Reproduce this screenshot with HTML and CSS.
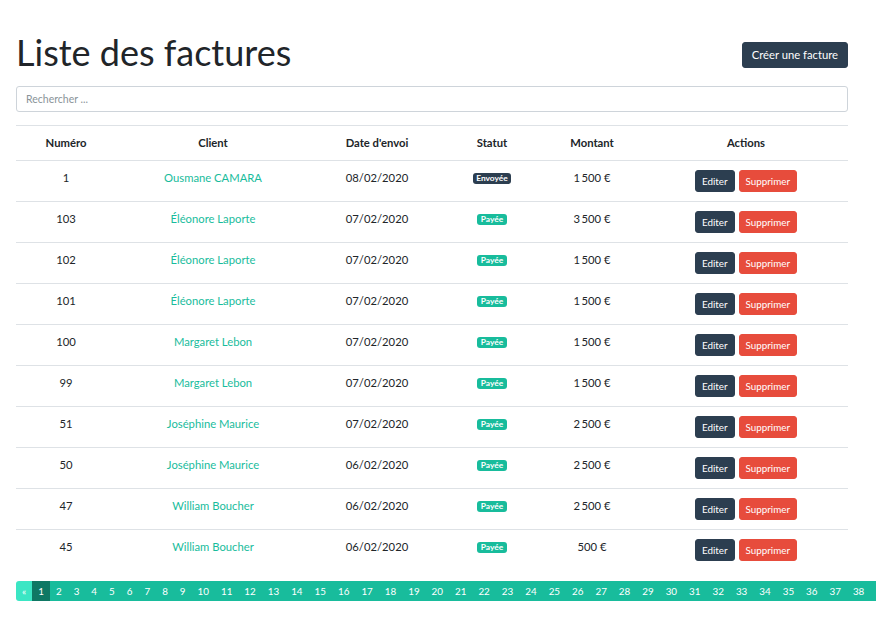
FILE: index.html
```html
<!DOCTYPE html>
<html lang="fr">
<head>
<meta charset="utf-8">
<title>Liste des factures</title>
<link rel="stylesheet" href="styles.css">
</head>
<body>
<div class="page">
  <div class="head">
    <h1 class="title">Liste des factures</h1>
    <button class="btn btn-primary btn-create">Créer une facture</button>
  </div>
  <input class="search" type="text" placeholder="Rechercher ...">
  <table class="table">
    <colgroup>
      <col class="c1"><col class="c2"><col class="c3"><col class="c4"><col class="c5"><col class="c6">
    </colgroup>
    <thead>
      <tr><th>Numéro</th><th>Client</th><th>Date d'envoi</th><th>Statut</th><th>Montant</th><th>Actions</th></tr>
    </thead>
    <tbody>
      <tr><td>1</td><td><a href="#">Ousmane CAMARA</a></td><td>08/02/2020</td><td><span class="badge badge-dark">Envoyée</span></td><td>1<span class="nsp"> </span>500&nbsp;€</td><td><div class="actions"><button class="btn btn-primary btn-sm">Editer</button><button class="btn btn-danger btn-sm">Supprimer</button></div></td></tr>
      <tr><td>103</td><td><a href="#">Éléonore Laporte</a></td><td>07/02/2020</td><td><span class="badge badge-success">Payée</span></td><td>3<span class="nsp"> </span>500&nbsp;€</td><td><div class="actions"><button class="btn btn-primary btn-sm">Editer</button><button class="btn btn-danger btn-sm">Supprimer</button></div></td></tr>
      <tr><td>102</td><td><a href="#">Éléonore Laporte</a></td><td>07/02/2020</td><td><span class="badge badge-success">Payée</span></td><td>1<span class="nsp"> </span>500&nbsp;€</td><td><div class="actions"><button class="btn btn-primary btn-sm">Editer</button><button class="btn btn-danger btn-sm">Supprimer</button></div></td></tr>
      <tr><td>101</td><td><a href="#">Éléonore Laporte</a></td><td>07/02/2020</td><td><span class="badge badge-success">Payée</span></td><td>1<span class="nsp"> </span>500&nbsp;€</td><td><div class="actions"><button class="btn btn-primary btn-sm">Editer</button><button class="btn btn-danger btn-sm">Supprimer</button></div></td></tr>
      <tr><td>100</td><td><a href="#">Margaret Lebon</a></td><td>07/02/2020</td><td><span class="badge badge-success">Payée</span></td><td>1<span class="nsp"> </span>500&nbsp;€</td><td><div class="actions"><button class="btn btn-primary btn-sm">Editer</button><button class="btn btn-danger btn-sm">Supprimer</button></div></td></tr>
      <tr><td>99</td><td><a href="#">Margaret Lebon</a></td><td>07/02/2020</td><td><span class="badge badge-success">Payée</span></td><td>1<span class="nsp"> </span>500&nbsp;€</td><td><div class="actions"><button class="btn btn-primary btn-sm">Editer</button><button class="btn btn-danger btn-sm">Supprimer</button></div></td></tr>
      <tr><td>51</td><td><a href="#">Joséphine Maurice</a></td><td>07/02/2020</td><td><span class="badge badge-success">Payée</span></td><td>2<span class="nsp"> </span>500&nbsp;€</td><td><div class="actions"><button class="btn btn-primary btn-sm">Editer</button><button class="btn btn-danger btn-sm">Supprimer</button></div></td></tr>
      <tr><td>50</td><td><a href="#">Joséphine Maurice</a></td><td>06/02/2020</td><td><span class="badge badge-success">Payée</span></td><td>2<span class="nsp"> </span>500&nbsp;€</td><td><div class="actions"><button class="btn btn-primary btn-sm">Editer</button><button class="btn btn-danger btn-sm">Supprimer</button></div></td></tr>
      <tr><td>47</td><td><a href="#">William Boucher</a></td><td>06/02/2020</td><td><span class="badge badge-success">Payée</span></td><td>2<span class="nsp"> </span>500&nbsp;€</td><td><div class="actions"><button class="btn btn-primary btn-sm">Editer</button><button class="btn btn-danger btn-sm">Supprimer</button></div></td></tr>
      <tr><td>45</td><td><a href="#">William Boucher</a></td><td>06/02/2020</td><td><span class="badge badge-success">Payée</span></td><td>500&nbsp;€</td><td><div class="actions"><button class="btn btn-primary btn-sm">Editer</button><button class="btn btn-danger btn-sm">Supprimer</button></div></td></tr>
    </tbody>
  </table>
  <ul class="pagination">
    <li class="page-item disabled"><span>«</span></li>
    <li class="page-item active"><span>1</span></li>
    <li class="page-item"><span>2</span></li>
    <li class="page-item"><span>3</span></li>
    <li class="page-item"><span>4</span></li>
    <li class="page-item"><span>5</span></li>
    <li class="page-item"><span>6</span></li>
    <li class="page-item"><span>7</span></li>
    <li class="page-item"><span>8</span></li>
    <li class="page-item"><span>9</span></li>
    <li class="page-item"><span>10</span></li>
    <li class="page-item"><span>11</span></li>
    <li class="page-item"><span>12</span></li>
    <li class="page-item"><span>13</span></li>
    <li class="page-item"><span>14</span></li>
    <li class="page-item"><span>15</span></li>
    <li class="page-item"><span>16</span></li>
    <li class="page-item"><span>17</span></li>
    <li class="page-item"><span>18</span></li>
    <li class="page-item"><span>19</span></li>
    <li class="page-item"><span>20</span></li>
    <li class="page-item"><span>21</span></li>
    <li class="page-item"><span>22</span></li>
    <li class="page-item"><span>23</span></li>
    <li class="page-item"><span>24</span></li>
    <li class="page-item"><span>25</span></li>
    <li class="page-item"><span>26</span></li>
    <li class="page-item"><span>27</span></li>
    <li class="page-item"><span>28</span></li>
    <li class="page-item"><span>29</span></li>
    <li class="page-item"><span>30</span></li>
    <li class="page-item"><span>31</span></li>
    <li class="page-item"><span>32</span></li>
    <li class="page-item"><span>33</span></li>
    <li class="page-item"><span>34</span></li>
    <li class="page-item"><span>35</span></li>
    <li class="page-item"><span>36</span></li>
    <li class="page-item"><span>37</span></li>
    <li class="page-item"><span>38</span></li>
    <li class="page-item page-tail"><span></span></li>
  </ul>
</div>
</body>
</html>
```
FILE: styles.css
```css
html, body {
  margin: 0;
  padding: 0;
  overflow: hidden;
}
body {
  font-family: Lato, "Noto Sans", sans-serif;
  font-size: 11.25px;
  line-height: 1.5;
  color: #212529;
  background: #fff;
}
.page {
  width: 832px;
  padding: 0 16px;
}
.head {
  display: flex;
  justify-content: space-between;
  align-items: flex-start;
  padding-top: 31px;
}
.title {
  margin: 0;
  font-size: 36px;
  font-weight: 400;
  line-height: 43px;
}
.btn {
  font-family: inherit;
  border: 1px solid transparent;
  color: #fff;
  cursor: pointer;
  border-radius: 3px;
  box-sizing: border-box;
}
.btn-primary { background: #2c3e50; border-color: #2c3e50; }
.btn-danger { background: #e74c3c; border-color: #e74c3c; }
.btn-create {
  font-size: 11.25px;
  height: 26px;
  padding: 0 9px;
  line-height: 24px;
  margin-top: 11px;
}
.search {
  display: block;
  box-sizing: border-box;
  width: 100%;
  height: 26px;
  padding: 0 9px;
  font-family: inherit;
  font-size: 10.5px;
  border: 1px solid #ced4da;
  border-radius: 3px;
  color: #212529;
  margin: 12px 0 13px;
  outline: none;
}
.search::placeholder { color: #8a9499; }
.table {
  width: 100%;
  border-collapse: collapse;
  table-layout: fixed;
  margin-bottom: 11px;
}
.c1 { width: 100px; }
.c2 { width: 194px; }
.c3 { width: 134px; }
.c4 { width: 96px; }
.c5 { width: 104px; }
.c6 { width: 204px; }
.table th, .table td {
  text-align: center;
  border-top: 1px solid #dee2e6;
  vertical-align: top;
  padding: 9px 0;
}
.table th {
  font-weight: 700;
  line-height: 16px;
  border-bottom: 1px solid #dee2e6;
}
.table td { line-height: 15px; }
.table thead + tbody tr:first-child td { border-top: 0; }
.nsp { display: inline-block; width: 1.5px; }
a { color: #18bc9c; text-decoration: none; }
.badge {
  display: inline-block;
  font-size: 8.4px;
  font-weight: 700;
  color: #fff;
  line-height: 8.4px;
  padding: 1.5px 3.4px;
  border-radius: 3px;
  vertical-align: 1px;
}
.badge-dark { background: #2c3e50; }
.badge-success { background: #18bc9c; }
.actions {
  display: flex;
  justify-content: center;
  gap: 4px;
}
.btn-sm {
  font-size: 9.84px;
  height: 22px;
  line-height: 20px;
  padding: 0 6px;
}
.pagination {
  display: flex;
  list-style: none;
  margin: 0;
  padding: 0;
  white-space: nowrap;
}
.page-item span {
  display: block;
  background: #18bc9c;
  color: #fff;
  font-size: 9.84px;
  line-height: 20px;
  height: 20px;
  padding: 0 6px;
}
.page-tail span { width: 20px; }
.page-item.disabled span { background: #3be6c4; border-radius: 3px 0 0 3px; }
.page-item.active span { background: #0f7864; }
```
